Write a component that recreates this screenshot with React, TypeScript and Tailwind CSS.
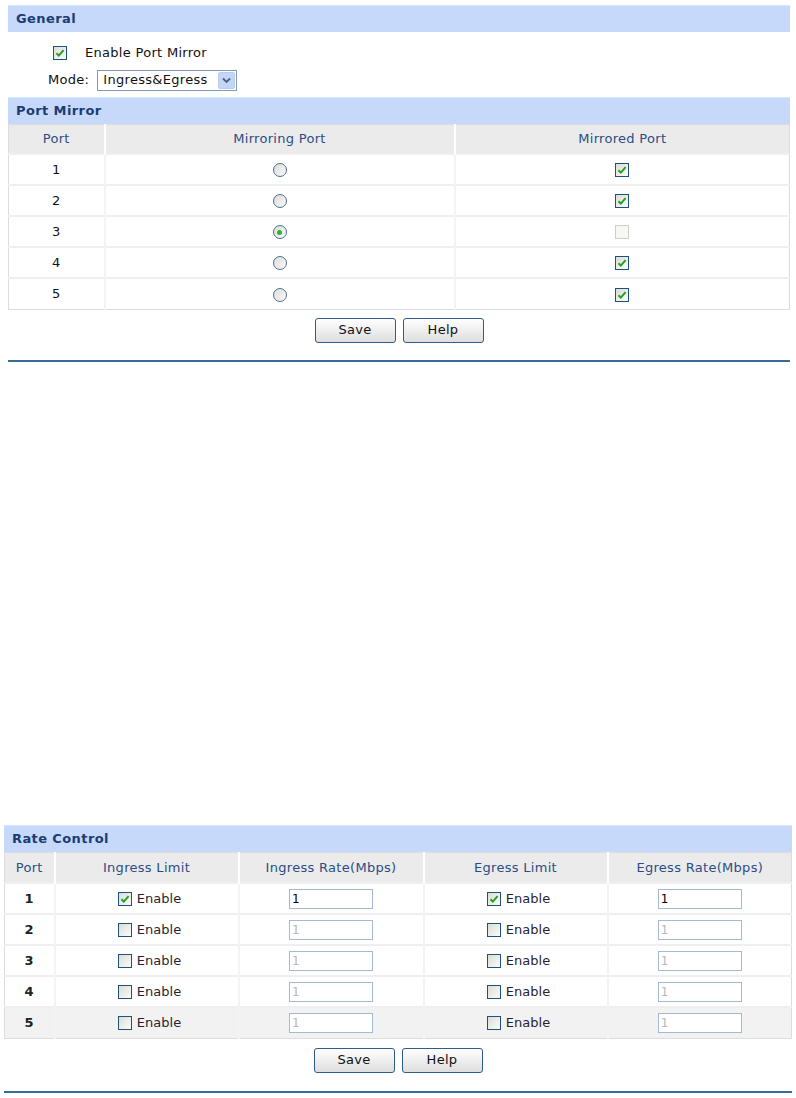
import React from "react"

const FONT = "font-['DejaVu_Sans',Verdana,sans-serif]"

const Check = ({ checked, disabled }: { checked?: boolean; disabled?: boolean }) => (
  <span
    className={
      "inline-flex h-[14px] w-[14px] shrink-0 items-center justify-center border " +
      (disabled
        ? "border-[#cfcfc4] bg-[#f7f7f3]"
        : "border-[#1c5180] bg-gradient-to-br from-[#dcdcd5] to-[#fbfbfb]")
    }
  >
    {checked && (
      <svg width="10" height="10" viewBox="0 0 10 10">
        <path d="M1.5 5.2 L3.8 7.6 L8.6 2.2" fill="none" stroke="#21a121" strokeWidth="2" />
      </svg>
    )}
  </span>
)

const Radio = ({ checked }: { checked?: boolean }) => (
  <span className="inline-flex h-[14px] w-[14px] items-center justify-center rounded-full border border-[#4d6f99] bg-gradient-to-br from-[#dcdcd5] to-[#fbfbfb]">
    {checked && <span className="h-[5px] w-[5px] rounded-full bg-[#2fb42f]" />}
  </span>
)

const Btn = ({ label }: { label: string }) => (
  <button className="h-[25px] w-[81px] rounded-[3px] border border-[#2f5c8a] bg-gradient-to-b from-[#ffffff] to-[#dedede] text-[13px] tracking-[0.3px] text-[#111]">
    {label}
  </button>
)

const Header = ({ title }: { title: string }) => (
  <div className="flex h-[27px] items-center border-t border-[#d8e6fd] bg-[#c6d9fb] pl-[8px] text-[13px] font-bold tracking-[0.4px] text-[#1c3c74]">
    {title}
  </div>
)

const mirrorRows = [
  { port: 1, mirroring: false, mirrored: true },
  { port: 2, mirroring: false, mirrored: true },
  { port: 3, mirroring: true, mirrored: false },
  { port: 4, mirroring: false, mirrored: true },
  { port: 5, mirroring: false, mirrored: true },
]

const rateRows = [
  { port: 1, ingress: true, egress: true },
  { port: 2, ingress: false, egress: false },
  { port: 3, ingress: false, egress: false },
  { port: 4, ingress: false, egress: false },
  { port: 5, ingress: false, egress: false },
]

const RateInput = ({ active }: { active: boolean }) => (
  <span
    className={
      "inline-flex h-[20px] w-[84px] items-center border border-[#a5b9d4] bg-white pl-[2px] text-[12px] " +
      (active ? "text-[#000]" : "text-[#b8b8b8]")
    }
  >
    1
  </span>
)

export default function App() {
  return (
    <div className={"min-h-[1098px] w-[796px] bg-white " + FONT}>
      {/* Port mirror panel */}
      <div className="mx-[8px] w-[782px] pt-[5px]">
        <Header title="General" />
        <div className="flex items-center gap-[18px] pl-[45px] pt-[11px] text-[13px] tracking-[0.3px] text-[#111]">
          <Check checked />
          <span>Enable Port Mirror</span>
        </div>
        <div className="flex items-center gap-[8px] pl-[40px] pt-[7px] text-[13px] tracking-[0.3px] text-[#111]">
          <span>Mode:</span>
          <div className="flex h-[21px] w-[140px] items-center justify-between border border-[#7f9db9] bg-white pl-[5px] pr-[1px]">
            <span>Ingress&amp;Egress</span>
            <span className="flex h-[17px] w-[17px] items-center justify-center rounded-[2px] border border-[#b9cdf0] bg-[#c4d5f5]">
              <svg width="9" height="7" viewBox="0 0 9 7">
                <path d="M1 1.5 L4.5 5 L8 1.5" fill="none" stroke="#4d6185" strokeWidth="1.8" />
              </svg>
            </span>
          </div>
        </div>
        <div className="pt-[6px]">
          <Header title="Port Mirror" />
        </div>
        <table className="w-full table-fixed border-collapse border border-[#dcdcdc] text-[13px] tracking-[0.3px]">
          <colgroup>
            <col className="w-[96px]" />
            <col className="w-[350px]" />
            <col />
          </colgroup>
          <thead>
            <tr className="h-[30px] bg-[#ebebeb] text-[#2c4d86]">
              <th className="border-r-2 border-white font-normal">Port</th>
              <th className="border-r-2 border-white font-normal">Mirroring Port</th>
              <th className="font-normal">Mirrored Port</th>
            </tr>
          </thead>
          <tbody>
            {mirrorRows.map((r) => (
              <tr key={r.port} className="h-[31px] border-t-2 border-[#efefef] text-[#111]">
                <td className="border-r-2 border-[#f3f3f3] text-center">{r.port}</td>
                <td className="border-r-2 border-[#f3f3f3] text-center">
                  <span className="inline-flex align-middle">
                    <Radio checked={r.mirroring} />
                  </span>
                </td>
                <td className="text-center">
                  <span className="inline-flex align-middle">
                    <Check checked={r.mirrored} disabled={!r.mirrored} />
                  </span>
                </td>
              </tr>
            ))}
          </tbody>
        </table>
        <div className="flex justify-center gap-[7px] pt-[8px]">
          <Btn label="Save" />
          <Btn label="Help" />
        </div>
        <div className="mt-[17px] h-[2px] bg-[#3a6a98]" />
      </div>

      {/* Rate control panel */}
      <div className="mx-[4px] mt-[463px] w-[788px]">
        <Header title="Rate Control" />
        <table className="w-full table-fixed border-collapse border border-[#dcdcdc] text-[13px] tracking-[0.3px]">
          <colgroup>
            <col className="w-[50px]" />
            <col className="w-[184px]" />
            <col className="w-[185px]" />
            <col className="w-[184px]" />
            <col />
          </colgroup>
          <thead>
            <tr className="h-[31px] bg-[#ebebeb] text-[#2c4d86]">
              <th className="border-r-2 border-white font-normal">Port</th>
              <th className="border-r-2 border-white font-normal">Ingress Limit</th>
              <th className="border-r-2 border-white font-normal">Ingress Rate(Mbps)</th>
              <th className="border-r-2 border-white font-normal">Egress Limit</th>
              <th className="font-normal">Egress Rate(Mbps)</th>
            </tr>
          </thead>
          <tbody>
            {rateRows.map((r) => (
              <tr
                key={r.port}
                className={
                  "h-[31px] border-t-2 border-[#efefef] text-[#222] " +
                  (r.port === 5 ? "bg-[#f2f2f2]" : "bg-white")
                }
              >
                <td className="border-r-2 border-[#f3f3f3] text-center font-semibold">{r.port}</td>
                <td className="border-r-2 border-[#f3f3f3]">
                  <div className="flex items-center justify-center gap-[5px] pl-[6px] text-[13px] tracking-normal text-[#2a1f2f]">
                    <Check checked={r.ingress} />
                    <span>Enable</span>
                  </div>
                </td>
                <td className="border-r-2 border-[#f3f3f3] text-center">
                  <span className="inline-flex align-middle">
                    <RateInput active={r.ingress} />
                  </span>
                </td>
                <td className="border-r-2 border-[#f3f3f3]">
                  <div className="flex items-center justify-center gap-[5px] pl-[6px] text-[13px] tracking-normal text-[#2a1f2f]">
                    <Check checked={r.egress} />
                    <span>Enable</span>
                  </div>
                </td>
                <td className="text-center">
                  <span className="inline-flex align-middle">
                    <RateInput active={r.egress} />
                  </span>
                </td>
              </tr>
            ))}
          </tbody>
        </table>
        <div className="flex justify-center gap-[7px] pt-[9px]">
          <Btn label="Save" />
          <Btn label="Help" />
        </div>
        <div className="mt-[18px] h-[2px] bg-[#3a6a98]" />
      </div>
    </div>
  )
}
